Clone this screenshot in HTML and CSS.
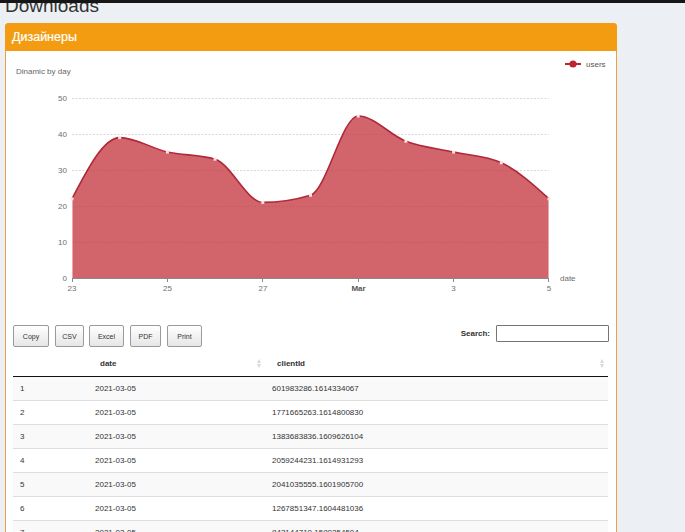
FILE: index.html
```html
<!DOCTYPE html>
<html>
<head>
<meta charset="utf-8">
<link rel="stylesheet" href="styles.css">
</head>
<body>
<div class="topbar"></div>
<div class="page">
  <h1 class="page-title">Downloads</h1>
  <div class="box">
    <div class="box-header"><h3 class="box-title">Дизайнеры</h3></div>
    <div class="box-body">
      <svg class="chart" width="610" height="264" viewBox="6 51 610 264" xmlns="http://www.w3.org/2000/svg">
        <text class="chart-title" x="16" y="74">Dinamic by day</text>
        <g class="legend">
          <line x1="565" y1="64" x2="581" y2="64" stroke="#c0242f" stroke-width="2"/>
          <circle cx="573" cy="64" r="3.6" fill="#c0242f"/>
          <text class="legend-text" x="586" y="67">users</text>
        </g>
        <g class="grid" stroke="#cfcfcf" stroke-width="0.8" stroke-dasharray="2,1.5">
          <line x1="72" y1="98.5" x2="549" y2="98.5"/>
          <line x1="72" y1="134.5" x2="549" y2="134.5"/>
          <line x1="72" y1="170.5" x2="549" y2="170.5"/>
          <line x1="72" y1="206.5" x2="549" y2="206.5"/>
          <line x1="72" y1="242.5" x2="549" y2="242.5"/>
        </g>
        <g class="ylab">
          <text x="67" y="101">50</text>
          <text x="67" y="137">40</text>
          <text x="67" y="173">30</text>
          <text x="67" y="209">20</text>
          <text x="67" y="245">10</text>
          <text x="67" y="281">0</text>
        </g>
        <path fill="rgba(196,52,60,0.76)" d="M72,198.8 C87.9,168.2 103.8,137.6 119.7,137.6 C135.6,137.6 151.5,148.4 167.4,152 C183.3,155.6 199.2,154.4 215.1,159.2 C231,164 246.9,202.4 262.8,202.4 C278.7,202.4 294.6,200 310.5,195.2 C326.4,190.4 342.3,116 358.2,116 C374.1,116 390,135.2 405.9,141.2 C421.8,147.2 437.7,148.4 453.6,152 C469.5,155.6 485.4,155.6 501.3,162.8 C517.2,170 533.1,184.4 549,198.8 L549,278 L72,278 Z"/>
        <path fill="none" stroke="#b0283a" stroke-width="1.6" d="M72,198.8 C87.9,168.2 103.8,137.6 119.7,137.6 C135.6,137.6 151.5,148.4 167.4,152 C183.3,155.6 199.2,154.4 215.1,159.2 C231,164 246.9,202.4 262.8,202.4 C278.7,202.4 294.6,200 310.5,195.2 C326.4,190.4 342.3,116 358.2,116 C374.1,116 390,135.2 405.9,141.2 C421.8,147.2 437.7,148.4 453.6,152 C469.5,155.6 485.4,155.6 501.3,162.8 C517.2,170 533.1,184.4 549,198.8"/>
        <line x1="72.5" y1="199" x2="72.5" y2="278" stroke="#e9a9ac" stroke-width="1"/>
        <line x1="548.5" y1="199" x2="548.5" y2="278" stroke="#e9a9ac" stroke-width="1"/>
        <g class="pts" fill="#fbe3e4">
          <rect x="70.5" y="197.3" width="3" height="3"/>
          <rect x="118.2" y="136.1" width="3" height="3"/>
          <rect x="165.9" y="150.5" width="3" height="3"/>
          <rect x="213.6" y="157.7" width="3" height="3"/>
          <rect x="261.3" y="200.9" width="3" height="3"/>
          <rect x="309" y="193.7" width="3" height="3"/>
          <rect x="356.7" y="114.5" width="3" height="3"/>
          <rect x="404.4" y="139.7" width="3" height="3"/>
          <rect x="452.1" y="150.5" width="3" height="3"/>
          <rect x="499.8" y="161.3" width="3" height="3"/>
          <rect x="547.5" y="197.3" width="3" height="3"/>
        </g>
        <line x1="72" y1="278.5" x2="549" y2="278.5" stroke="#8a8a8a" stroke-width="1"/>
        <g stroke="#8a8a8a" stroke-width="1">
          <line x1="72.5" y1="278" x2="72.5" y2="282"/>
          <line x1="167.5" y1="278" x2="167.5" y2="282"/>
          <line x1="262.5" y1="278" x2="262.5" y2="282"/>
          <line x1="358.5" y1="278" x2="358.5" y2="282"/>
          <line x1="453.5" y1="278" x2="453.5" y2="282"/>
          <line x1="548.5" y1="278" x2="548.5" y2="282"/>
        </g>
        <g class="xlab">
          <text x="72" y="291">23</text>
          <text x="167.5" y="291">25</text>
          <text x="263" y="291">27</text>
          <text class="xlab-strong" x="358.5" y="291">Mar</text>
          <text x="453.5" y="291">3</text>
          <text x="549" y="291">5</text>
        </g>
        <text class="axis-name" x="560" y="281">date</text>
      </svg>

      <div class="dt-controls">
        <div class="dt-buttons">
          <button class="dt-btn btn-copy">Copy</button>
          <button class="dt-btn btn-csv">CSV</button>
          <button class="dt-btn btn-excel">Excel</button>
          <button class="dt-btn btn-pdf">PDF</button>
          <button class="dt-btn btn-print">Print</button>
        </div>
        <label class="dt-search">Search: <input class="dt-input" type="search"></label>
      </div>

      <table class="dt-table">
        <thead>
          <tr>
            <th class="col-n"></th>
            <th class="col-date sortable">date<span class="sort-icon"><i class="up"></i><i class="down"></i></span></th>
            <th class="col-id sortable">clientId<span class="sort-icon"><i class="up"></i><i class="down"></i></span></th>
          </tr>
        </thead>
        <tbody>
          <tr><td>1</td><td>2021-03-05</td><td>601983286.1614334067</td></tr>
          <tr><td>2</td><td>2021-03-05</td><td>1771665263.1614800830</td></tr>
          <tr><td>3</td><td>2021-03-05</td><td>1383683836.1609626104</td></tr>
          <tr><td>4</td><td>2021-03-05</td><td>2059244231.1614931293</td></tr>
          <tr><td>5</td><td>2021-03-05</td><td>2041035555.1601905700</td></tr>
          <tr><td>6</td><td>2021-03-05</td><td>1267851347.1604481036</td></tr>
          <tr><td>7</td><td>2021-03-05</td><td>843144710.1580254504</td></tr>
        </tbody>
      </table>
    </div>
  </div>
</div>
</body>
</html>
```

FILE: styles.css
```css
html, body {
  margin: 0;
  padding: 0;
  overflow: hidden;
  height: 532px;
}
body {
  background: #ecf0f5;
  font-family: "Liberation Sans", Arial, sans-serif;
  color: #333;
}
.topbar {
  position: relative;
  z-index: 2;
  height: 3px;
  background: #161616;
}
.page {
  padding-left: 5px;
}
.page-title {
  margin: -7px 0 7px 0;
  font-size: 19px;
  line-height: 20px;
  font-weight: normal;
  color: #333;
}
.box {
  width: 612px;
  background: #fff;
}
.box-header {
  height: 28px;
  background: #f39c12;
  border-radius: 3px 3px 0 0;
  display: flex;
  align-items: center;
  padding-left: 7px;
}
.box-title {
  margin: 0;
  color: #fff;
  font-size: 12.5px;
  font-weight: normal;
  -webkit-text-stroke: 0.2px #fff;
}
.box-body {
  border-left: 1px solid #e8a43c;
  border-right: 1px solid #e8a43c;
  padding: 0 7px 0 6px;
  height: 500px;
}
.chart {
  display: block;
  margin-left: -6px;
}
.chart text {
  font-family: "Liberation Sans", Arial, sans-serif;
}
.chart-title {
  font-size: 8px;
  fill: #666;
}
.legend-text {
  font-size: 8px;
  fill: #555;
}
.ylab text {
  font-size: 8px;
  fill: #6e6e6e;
  text-anchor: end;
}
.xlab text {
  font-size: 8px;
  fill: #6e6e6e;
  text-anchor: middle;
}
.xlab .xlab-strong {
  font-weight: bold;
  fill: #555;
}
.axis-name {
  font-size: 8px;
  fill: #6e6e6e;
}
.dt-controls {
  display: flex;
  justify-content: space-between;
  align-items: flex-start;
  margin-top: 10px;
  padding-left: 1px;
}
.dt-buttons {
  display: flex;
  gap: 6px;
}
.dt-btn {
  height: 22px;
  padding: 0;
  border: 1px solid #9a9a9a;
  border-radius: 2px;
  background: linear-gradient(#ffffff, #e6e6e6);
  font-family: "Liberation Sans", Arial, sans-serif;
  font-size: 7px;
  color: #333;
}
.btn-copy { width: 36px; }
.btn-csv { width: 29px; margin-right: -1px; }
.btn-excel { width: 35px; }
.btn-pdf { width: 31px; }
.btn-print { width: 35px; }
.dt-search {
  display: flex;
  align-items: center;
  gap: 6px;
  font-size: 8px;
  font-weight: bold;
  color: #333;
}
.dt-input {
  width: 113px;
  height: 17px;
  box-sizing: border-box;
  margin: 0;
  border: 1px solid #767676;
  border-radius: 1px;
  padding: 0 3px;
  font-size: 8px;
}
.dt-table {
  margin-top: 5px;
  margin-left: 1px;
  width: 595px;
  table-layout: fixed;
  border-collapse: collapse;
  font-size: 8px;
  color: #333;
}
.dt-table th {
  box-sizing: border-box;
  height: 24px;
  text-align: left;
  font-weight: bold;
  padding: 0 0 0 12px;
  border-bottom: 1px solid #111;
  position: relative;
}
.dt-table .col-n { width: 75px; padding: 0; }
.dt-table .col-date { width: 177px; }
.sort-icon {
  position: absolute;
  right: 4px;
  top: 7px;
  display: flex;
  flex-direction: column;
  gap: 1px;
}
.sort-icon i {
  display: block;
  width: 0;
  height: 0;
  border-left: 2px solid transparent;
  border-right: 2px solid transparent;
}
.sort-icon .up { border-bottom: 4px solid #d8d8d8; }
.sort-icon .down { border-top: 4px solid #d8d8d8; }
.dt-table td {
  height: 23px;
  padding: 0 0 0 7px;
  border-top: 1px solid #dddddd;
  white-space: nowrap;
}
.dt-table tbody tr:first-child td {
  border-top: none;
}
.dt-table tbody tr:nth-child(odd) {
  background: #f9f9f9;
}
```
